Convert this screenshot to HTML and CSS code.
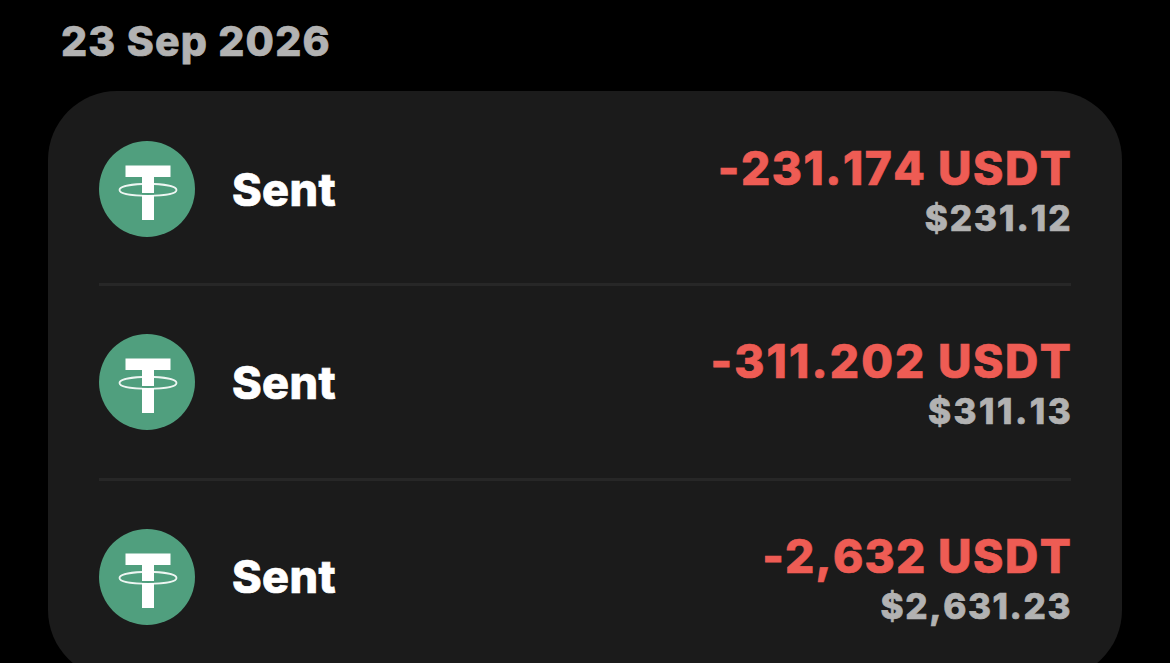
FILE: index.html
```html
<!DOCTYPE html>
<html lang="en">
<head>
    <meta charset="UTF-8">
    <meta name="viewport" content="width=device-width, initial-scale=1.0">
    <title>Transactions</title>
    <link rel="stylesheet" href="styles.css">
</head>
<body>
    <svg class="defs" width="0" height="0">
        <symbol id="usdt" viewBox="0 0 96 96">
            <circle cx="48" cy="48" r="48" fill="#509f7e"/>
            <path d="M26.500 24.500h45v11.500H55v16H43V36H26.500zM43 54h12v25H43z" fill="#fff"/>
            <path d="M43 43C31 43.500 20.500 45.500 20.500 49c0 4 13 5.800 28.500 5.800S77.500 53 77.500 49c0-3.500-10.500-5.500-22.500-6" fill="none" stroke="#fff" stroke-opacity=".9" stroke-width="1.800"/>
            <path d="M43 52.800h12" stroke="#509f7e" stroke-width="1.300"/>
        </symbol>
    </svg>

    <h2 class="date">23 Sep 2026</h2>
    <div class="card">
        <div class="row">
            <svg class="coin"><use href="#usdt"/></svg>
            <span class="title">Sent</span>
            <div class="amounts">
                <div class="amount"><span class="num">-231.174</span> USDT</div>
                <div class="fiat">$231.12</div>
            </div>
        </div>
        <div class="row wide">
            <svg class="coin"><use href="#usdt"/></svg>
            <span class="title">Sent</span>
            <div class="amounts">
                <div class="amount"><span class="num">-311.202</span> USDT</div>
                <div class="fiat">$311.13</div>
            </div>
        </div>
        <div class="row narrow">
            <svg class="coin"><use href="#usdt"/></svg>
            <span class="title">Sent</span>
            <div class="amounts">
                <div class="amount"><span class="num">-2,632</span> USDT</div>
                <div class="fiat">$2,631.23</div>
            </div>
        </div>
    </div>
</body>
</html>
```

FILE: styles.css
```css
* {
    box-sizing: border-box;
}
body {
    margin: 0;
    height: 663px;
    overflow: hidden;
    background-color: #000;
    font-family: Inter, sans-serif;
    font-weight: 800;
    font-kerning: none;
    font-feature-settings: "calt" 0;
    -webkit-text-stroke: 0.7px currentColor;
}
.defs {
    display: block;
}
.date {
    margin: 0;
    padding: 16px 0 0 61px;
    height: 91px;
    font-size: 41px;
    font-weight: 800;
    line-height: 50px;
    letter-spacing: 1.2px;
    color: #b2b2b2;
}
.card {
    width: 1074px;
    height: 588px;
    margin-left: 48px;
    padding: 0 51px;
    border-radius: 69px;
    background-color: #1b1b1b;
}
.row {
    display: flex;
    align-items: center;
    height: 195px;
    border-bottom: 3px solid #272727;
}
.row:first-child {
    padding-top: 4px;
}
.row:last-child {
    height: 191px;
    border-bottom: none;
}
.coin {
    width: 96px;
    height: 96px;
}
.title {
    margin-left: 37px;
    font-size: 45px;
    letter-spacing: 0.4px;
    color: #fff;
}
.amounts {
    margin-left: auto;
    padding-top: 4px;
    text-align: right;
}
.amount {
    margin-right: -1.3px;
    font-size: 46px;
    line-height: 54px;
    letter-spacing: 1.5px;
    color: #ee5c54;
}
.fiat {
    margin-right: -1.6px;
    font-size: 35px;
    line-height: 46px;
    letter-spacing: 2px;
    color: #b2b2b2;
}
.wide .num {
    letter-spacing: 2.1px;
}
.wide .fiat {
    margin-right: -2.2px;
    letter-spacing: 2.5px;
}
.narrow .num {
    letter-spacing: 1.2px;
}
.narrow .fiat {
    margin-right: -1px;
    letter-spacing: 1.6px;
}
```
